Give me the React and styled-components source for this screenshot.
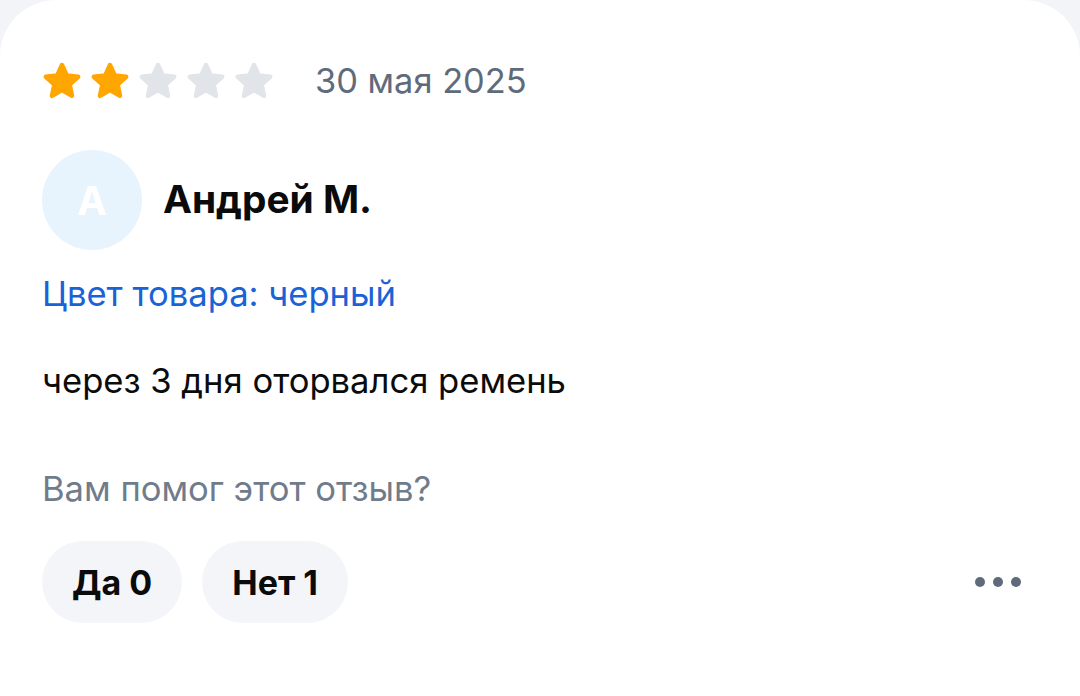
import React from "react";
import styled, { createGlobalStyle } from "styled-components";

const Global = createGlobalStyle`
  html, body { margin: 0; padding: 0; background: #f3f4f8; }
  body { font-family: Inter, "Noto Sans", sans-serif; -webkit-font-smoothing: antialiased; }
  * { box-sizing: border-box; }
`;

const Card = styled.div`
  background: #ffffff;
  border-radius: 56px 56px 0 0;
  min-height: 696px;
  padding: 61px 42px 0 42px;
  display: flex;
  flex-direction: column;
`;

const RatingRow = styled.div`
  display: flex;
  align-items: center;
  height: 40px;
`;

const Stars = styled.div`
  display: flex;
  gap: 8px;
`;

const StarSvg = styled.svg`
  width: 40px;
  height: 40px;
  display: block;
`;

const DateText = styled.span`
  margin-left: 41px;
  font-size: 34.4px;
  color: #5f6b7b;
  line-height: 40px;
`;

const Author = styled.div`
  display: flex;
  align-items: center;
  gap: 21px;
  margin-top: 49px;
`;

const Avatar = styled.div`
  width: 100px;
  height: 100px;
  border-radius: 50%;
  background: #e7f4fd;
  color: #ffffff;
  font-weight: 700;
  font-size: 40px;
  display: flex;
  align-items: center;
  justify-content: center;
`;

const Name = styled.div`
  font-size: 38.8px;
  font-weight: 700;
  color: #0b0b0c;
  margin-top: -4px;
`;

const Line = styled.div`
  font-size: 34.6px;
  line-height: 40px;
  color: ${(p) => p.$color};
  margin-top: ${(p) => p.$mt}px;
`;

const Actions = styled.div`
  display: flex;
  align-items: center;
  gap: 20px;
  margin-top: 33px;
`;

const VoteButton = styled.button`
  height: 82px;
  padding: 0 30px;
  border: none;
  border-radius: 41px;
  background: #f4f5f9;
  font-family: inherit;
  font-size: 34px;
  font-weight: 700;
  color: #0b0b0c;
`;

const More = styled.div`
  margin-left: auto;
  margin-right: 17px;
  display: flex;
  gap: 8px;
`;

const Dot = styled.span`
  width: 10px;
  height: 10px;
  border-radius: 50%;
  background: #5f6b7b;
`;

const STAR_POINTS =
  "20,4 24.7,14.5 36.2,15.8 27.6,23.5 30,34.8 20,29 10,34.8 12.4,23.5 3.8,15.8 15.3,14.5";

function Star({ filled }) {
  const c = filled ? "#ffa600" : "#e1e4e8";
  return (
    <StarSvg viewBox="0 0 40 40">
      <polygon points={STAR_POINTS} fill={c} stroke={c} strokeWidth="4.5" strokeLinejoin="round" />
    </StarSvg>
  );
}

export default function App() {
  return (
    <>
      <Global />
      <Card>
        <RatingRow>
          <Stars>
            {[1, 2, 3, 4, 5].map((i) => (
              <Star key={i} filled={i <= 2} />
            ))}
          </Stars>
          <DateText>30 мая 2025</DateText>
        </RatingRow>
        <Author>
          <Avatar>А</Avatar>
          <Name>Андрей М.</Name>
        </Author>
        <Line $color="#1a62d6" $mt={23}>Цвет товара: черный</Line>
        <Line $color="#0b0b0c" $mt={47}>через 3 дня оторвался ремень</Line>
        <Line $color="#707c8b" $mt={68}>Вам помог этот отзыв?</Line>
        <Actions>
          <VoteButton>Да 0</VoteButton>
          <VoteButton>Нет 1</VoteButton>
          <More>
            <Dot />
            <Dot />
            <Dot />
          </More>
        </Actions>
      </Card>
    </>
  );
}
